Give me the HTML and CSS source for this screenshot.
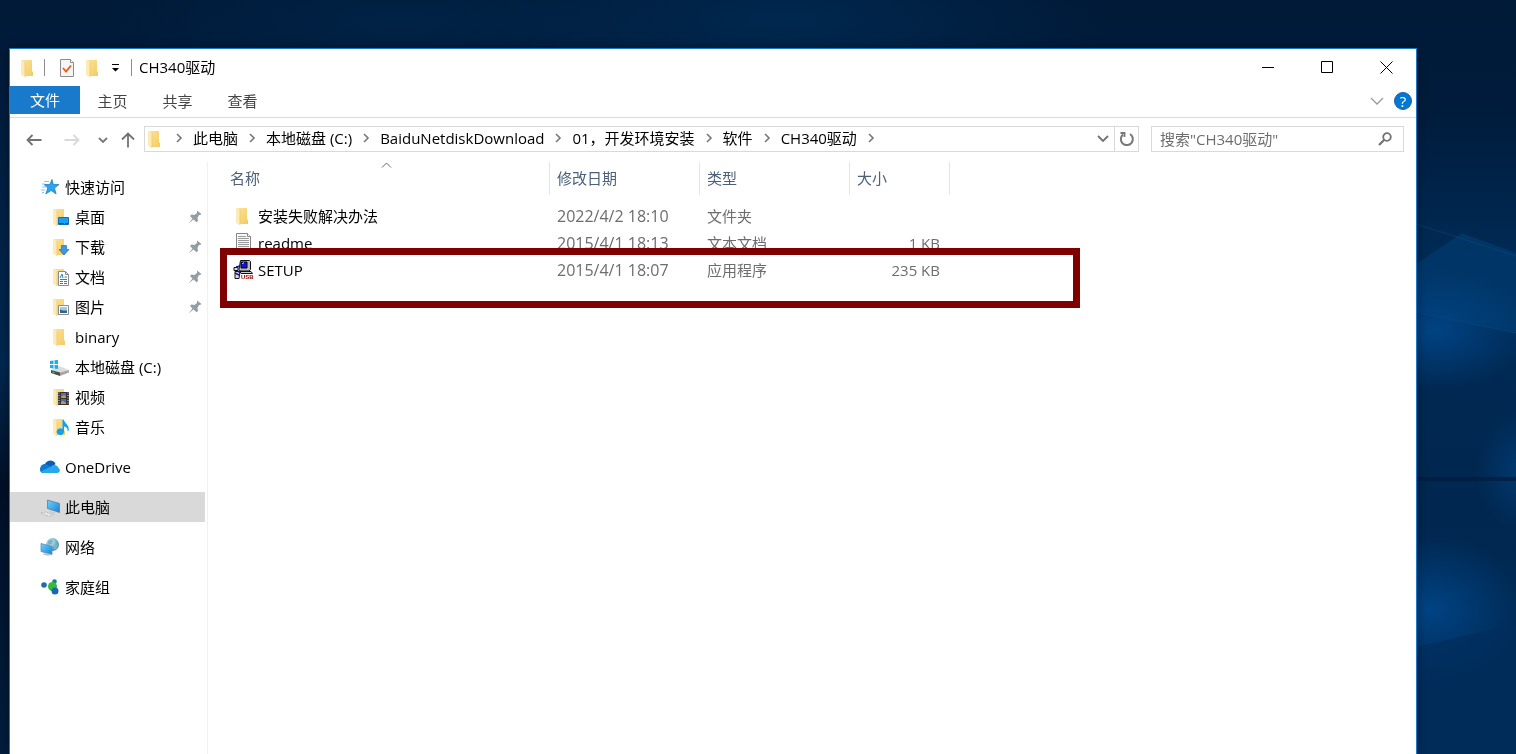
FILE: index.html
```html
<!DOCTYPE html>
<html lang="zh-CN">
  <head>
    <meta charset="UTF-8" />
    <meta name="viewport" content="width=device-width, initial-scale=1.0" />
    <title>CH340驱动</title>
    <link rel="stylesheet" href="styles.css">
  </head>
  <body>
    <!-- shared icons -->
    <svg class="sprite" aria-hidden="true">
      <defs>
        <linearGradient id="gold" x1="0" y1="0" x2="1" y2="1">
          <stop offset="0" stop-color="#fbe39a" />
          <stop offset="1" stop-color="#f3cb62" />
        </linearGradient>
        <linearGradient id="screen" x1="0" y1="0" x2="1" y2="1">
          <stop offset="0" stop-color="#6fd0ff" />
          <stop offset="1" stop-color="#1683d8" />
        </linearGradient>
        <radialGradient id="globeFill" cx="0.35" cy="0.3" r="0.8">
          <stop offset="0" stop-color="#d7eef5" />
          <stop offset="1" stop-color="#2c7fa8" />
        </radialGradient>
      </defs>
      <symbol id="folder" viewBox="0 0 20 20">
        <path d="M4 2h10v11l1 1v4H6z" fill="url(#gold)" />
        <path d="M3 2l4 2v15l-4-2z" fill="#fdebb5" />
        <path d="M7 4v15" stroke="#eec462" stroke-width="0.7" />
      </symbol>
      <symbol id="pin" viewBox="0 0 14 14">
        <path d="M9 0.500L13.500 4l-1.500 1-1 0-1.500 3 0.500 3-1.500 1.200-3-2.700-5 4 4-5L2 6l1.500-1.500 3 0.500 2.500-2z" fill="#929da5" />
      </symbol>
      <symbol id="next" viewBox="0 0 8 10">
        <path d="M2 1l4 4-4 4" fill="none" stroke="#777" stroke-width="1.6" />
      </symbol>
    </svg>

    <!-- desktop wallpaper -->
    <svg class="wallpaper" viewBox="0 0 1516 754" preserveAspectRatio="xMaxYMin slice" aria-hidden="true">
      <defs>
        <linearGradient id="sky" x1="0" y1="0" x2="0" y2="1">
          <stop offset="0" stop-color="#001a38" />
          <stop offset="0.15" stop-color="#001c3c" />
          <stop offset="0.35" stop-color="#002b56" />
          <stop offset="0.63" stop-color="#00274f" />
          <stop offset="1" stop-color="#002a55" />
        </linearGradient>
        <linearGradient id="leftShade" x1="0" y1="0" x2="0" y2="1">
          <stop offset="0" stop-color="#001a38" />
          <stop offset="0.45" stop-color="#00274f" />
          <stop offset="0.62" stop-color="#001026" />
          <stop offset="1" stop-color="#001d3d" />
        </linearGradient>
        <radialGradient id="topGlow">
          <stop offset="0" stop-color="#00284f" />
          <stop offset="1" stop-color="#00284f" stop-opacity="0" />
        </radialGradient>
        <radialGradient id="glow">
          <stop offset="0" stop-color="#004383" />
          <stop offset="1" stop-color="#004383" stop-opacity="0" />
        </radialGradient>
      </defs>
      <path d="M0 0h1516v754H0z" fill="url(#sky)" />
      <path d="M0 48h12v706H0z" fill="url(#leftShade)" />
      <ellipse cx="780" cy="20" rx="330" ry="90" fill="url(#topGlow)" />
      <ellipse cx="400" cy="20" rx="300" ry="70" fill="url(#topGlow)" opacity="0.6" />
      <path d="M1400 275l62-42 54 20v80l-116-25z" fill="#004077" opacity="0.55" />
      <ellipse cx="1435" cy="330" rx="100" ry="60" fill="url(#glow)" />
      <path d="M1410 222l106 34M1410 311l106 22" stroke="#0a4a82" opacity="0.5" />
      <ellipse cx="1516" cy="470" rx="40" ry="60" fill="url(#glow)" opacity="0.6" />
      <path d="M1400 479h116" stroke="#001e40" stroke-width="4" opacity="0.8" />
      <ellipse cx="1430" cy="610" rx="100" ry="75" fill="url(#glow)" />
      <path d="M1400 651l116-27v130h-116z" fill="#002e5c" opacity="0.7" />
    </svg>

    <div class="window">
      <header class="titlebar">
        <svg class="icon"><use href="#folder" /></svg>
        <span class="divider"></span>
        <button class="quick" aria-label="属性">
          <svg class="icon" viewBox="0 0 20 20">
            <path d="M3.500 1.500h10l3 3v14h-13z" fill="#f5f5f5" stroke="#8c8c8c" />
            <path d="M13.500 1.500v3h3" fill="#fff" stroke="#8c8c8c" />
            <path d="M6 10l3 3.500 5-6" fill="none" stroke="#f05a12" stroke-width="1.800" />
          </svg>
        </button>
        <button class="quick" aria-label="新建文件夹">
          <svg class="icon"><use href="#folder" /></svg>
        </button>
        <button class="quick caret" aria-label="自定义">
          <svg width="7" height="8" viewBox="0 0 7 8"><path d="M0 0h7v1H0zM0 4h7L3.500 7.500z" /></svg>
        </button>
        <span class="divider"></span>
        <h1>CH340驱动</h1>
        <div class="controls">
          <button aria-label="最小化">
            <svg width="13" height="13"><path d="M0 6.500h12" stroke="#000" /></svg>
          </button>
          <button aria-label="最大化">
            <svg width="13" height="13"><path d="M0.500 0.500h11v11h-11z" fill="none" stroke="#000" /></svg>
          </button>
          <button aria-label="关闭">
            <svg width="13" height="13"><path d="M0.500 0.500l12 12M12.500 0.500l-12 12" stroke="#000" /></svg>
          </button>
        </div>
      </header>

      <nav class="ribbon">
        <button class="tab file">文件</button>
        <button class="tab">主页</button>
        <button class="tab">共享</button>
        <button class="tab">查看</button>
        <div class="ribbon-end">
          <button aria-label="展开功能区">
            <svg width="14" height="8"><path d="M1 1l6 6 6-6" fill="none" stroke="#999" stroke-width="1.300" /></svg>
          </button>
          <button class="help" aria-label="帮助">?</button>
        </div>
      </nav>

      <div class="address-row">
        <button class="nav" aria-label="后退">
          <svg width="16" height="12"><path d="M15.500 6H1.500M6.500 1l-5 5 5 5" fill="none" stroke="#727272" stroke-width="1.800" /></svg>
        </button>
        <button class="nav" aria-label="前进">
          <svg width="16" height="12"><path d="M0.500 6h14M9.500 1l5 5-5 5" fill="none" stroke="#d9d9d9" stroke-width="1.800" /></svg>
        </button>
        <button class="nav small" aria-label="最近位置">
          <svg width="10" height="7"><path d="M1 1l4 4 4-4" fill="none" stroke="#777" stroke-width="1.800" /></svg>
        </button>
        <button class="nav up" aria-label="向上">
          <svg width="14" height="16"><path d="M7 15.500V1.500M1 7.500l6-6 6 6" fill="none" stroke="#727272" stroke-width="1.800" /></svg>
        </button>

        <div class="address">
          <svg class="icon"><use href="#folder" /></svg>
          <ol class="crumbs">
            <li><svg><use href="#next" /></svg><a href="#">此电脑</a></li>
            <li><svg><use href="#next" /></svg><a href="#">本地磁盘 (C:)</a></li>
            <li><svg><use href="#next" /></svg><a href="#">BaiduNetdiskDownload</a></li>
            <li><svg><use href="#next" /></svg><a href="#">01，开发环境安装</a></li>
            <li><svg><use href="#next" /></svg><a href="#">软件</a></li>
            <li><svg><use href="#next" /></svg><a href="#">CH340驱动</a></li>
            <li><svg><use href="#next" /></svg></li>
          </ol>
          <button class="history" aria-label="以前的位置">
            <svg width="12" height="8"><path d="M1 1l5 5 5-5" fill="none" stroke="#727272" stroke-width="1.800" /></svg>
          </button>
          <button class="refresh" aria-label="刷新">
            <svg width="16" height="16" viewBox="0 0 16 16">
              <path d="M4 3.500A6 6 0 1 0 11 3" fill="none" stroke="#777" stroke-width="2" />
              <path d="M1.500 2h4v4" fill="none" stroke="#777" stroke-width="1.800" />
            </svg>
          </button>
        </div>

        <div class="search">
          <input type="search" aria-label="搜索" placeholder='搜索"CH340驱动"' />
          <button aria-label="开始搜索">
            <svg width="14" height="14"><circle cx="9" cy="5" r="3.800" fill="none" stroke="#727272" stroke-width="1.800" /><path d="M6.300 7.700L1 13" stroke="#727272" stroke-width="2.200" /></svg>
          </button>
        </div>
      </div>

      <div class="content">
        <aside class="sidebar">
          <ul>
            <li><a href="#">
              <svg class="icon" viewBox="0 0 20 20">
                <path d="M12 2.500l1.300 5H19l-4.500 3.500 1.600 6-5-3.500-5.300 3.500 2-6L4 7.500h5.700z" fill="#2ea3ee" stroke="#1475bd" stroke-width="0.700" />
                <path d="M4 4.500h5M2 7h3M2 10h4M1 13h4M2 15.500h2" stroke="#83c8f2" />
              </svg>快速访问</a>
              <ul>
                <li><a href="#">
                  <svg class="icon" viewBox="0 0 20 20">
                    <use href="#folder" />
                    <path d="M8.500 10.500h10v7h-10z" fill="#18a0f5" stroke="#116db4" />
                    <path d="M9 16.500h9" stroke="#0d579b" stroke-dasharray="5 1" />
                  </svg>桌面<svg class="pin"><use href="#pin" /></svg></a></li>
                <li><a href="#">
                  <svg class="icon" viewBox="0 0 20 20">
                    <use href="#folder" />
                    <path d="M11.500 8.500h5v4h2.500l-5 5.500-5-5.500h2.500z" fill="#3e97e2" stroke="#2770b5" stroke-width="0.700" />
                  </svg>下载<svg class="pin"><use href="#pin" /></svg></a></li>
                <li><a href="#">
                  <svg class="icon" viewBox="0 0 20 20">
                    <use href="#folder" />
                    <path d="M8.500 4.500h7l3 3v11h-10z" fill="#fff" stroke="#8b8b8b" />
                    <path d="M15.500 4.500v3h3" fill="none" stroke="#8b8b8b" />
                    <path d="M10 11l2-4 1 4M14.500 10h2.500M10 12.500h7M10 14.500h3M14 14.500h3M10 16.500h3M14 16.500h3" fill="none" stroke="#1e86c6" />
                  </svg>文档<svg class="pin"><use href="#pin" /></svg></a></li>
                <li><a href="#">
                  <svg class="icon" viewBox="0 0 20 20">
                    <use href="#folder" />
                    <path d="M8.500 8.500h10v9h-10z" fill="#fff" stroke="#8b8b8b" />
                    <path d="M10 10h7v6h-7z" fill="#9acdf0" />
                    <path d="M10 12.500l3 1 4 0V16h-7z" fill="#3a6477" />
                  </svg>图片<svg class="pin"><use href="#pin" /></svg></a></li>
                <li><a href="#"><svg class="icon"><use href="#folder" /></svg>binary</a></li>
                <li><a href="#">
                  <svg class="icon" viewBox="0 0 20 20">
                    <path d="M1 13l8-4 10 4-9 3z" fill="#dcdcdc" />
                    <path d="M1 13l9 2.500V19l-9-3z" fill="#4c4c4c" />
                    <path d="M10 15.500l9-2.500v2.500L10 19z" fill="#a6a6a6" />
                    <path d="M0 4l3.500-.5v3.500H0zM4.500 3.300L8 3v4H4.500zM0 8h3.500v3.500L0 11zM4.500 8H8v4l-3.500-.4z" fill="#14b1eb" />
                    <path d="M2.500 15l2 .500" stroke="#5bda64" />
                  </svg>本地磁盘 (C:)</a></li>
                <li><a href="#">
                  <svg class="icon" viewBox="0 0 20 20">
                    <use href="#folder" />
                    <path d="M8 5h11v13H8z" fill="#343434" />
                    <path d="M9 5.500v12M18 5.500v12" stroke="#ddd" stroke-dasharray="1 1.500" />
                    <path d="M11 6h5v5h-5z" fill="#4674c7" /><path d="M11 12h5v5h-5z" fill="#3970c3" />
                    <path d="M11 10l3-2 2 2v1h-5zM11 15l2-1 3 2v1h-5z" fill="#d7953d" />
                  </svg>视频</a></li>
                <li><a href="#">
                  <svg class="icon" viewBox="0 0 20 20">
                    <use href="#folder" />
                    <path d="M12.500 3h1.500c1 4 6 5 4.500 11h-1c0.500-3-1.500-4-3.500-4.500v5.500a3.700 3.300 0 1 1-1.500-3z" fill="#0ea2f2" />
                  </svg>音乐</a></li>
              </ul>
            </li>
            <li><a href="#">
              <svg class="icon" viewBox="0 0 20 20">
                <path d="M5 7c2-4 8-5 10.500 0L10 12z" fill="#0a5db5" />
                <path d="M0 12.500C0 9 3 6 7 7.500l7 4L3 16c-2 0-3-1.500-3-3.500z" fill="#0f78d4" />
                <path d="M1 14.500l10-5c3-3 7-1 7.500 1.500 2.500 1.500 1.500 5-1.500 5H4c-1.500 0-2.500-.5-3-1.500z" fill="#28a8ea" />
              </svg>OneDrive</a></li>
            <li><a href="#" class="selected">
              <svg class="icon" viewBox="0 0 20 20">
                <path d="M7.500 3l12 3.500v9l-12-4z" fill="url(#screen)" stroke="#5f7d8e" stroke-width="0.800" />
                <path d="M10 14l6 2-2 1-5-2z" fill="#c4cacd" />
                <path d="M1 16l5-1 7 3-4 1.500z" fill="#e6e6e6" stroke="#a6adb0" stroke-width="0.700" stroke-dasharray="2 1" />
              </svg>此电脑</a></li>
            <li><a href="#">
              <svg class="icon" viewBox="0 0 20 20">
                <circle cx="12.500" cy="7.500" r="6.500" fill="url(#globeFill)" />
                <path d="M8 4l3-2 2 2-1 3-4 1zM14 8l4-1-1 4-3 2z" fill="#79b5ca" />
                <path d="M1 6.500l11 3v8l-11-3z" fill="url(#screen)" stroke="#5990b3" stroke-width="0.800" />
                <path d="M5 16l5 1.500 0 1-3 0-4-1z" fill="#b8bec2" />
              </svg>网络</a></li>
            <li><a href="#">
              <svg class="icon" viewBox="0 0 20 20">
                <circle cx="4" cy="8" r="2.800" fill="#1b6cb9" />
                <circle cx="14.500" cy="4.500" r="2.300" fill="#197ba0" />
                <circle cx="12.500" cy="9.500" r="4.500" fill="#35b93f" />
                <circle cx="15" cy="14" r="3.500" fill="#1c65b6" />
              </svg>家庭组</a></li>
          </ul>
        </aside>

        <main class="files">
          <table>
            <colgroup>
              <col class="col-name" />
              <col class="col-date" />
              <col class="col-type" />
              <col class="col-size" />
            </colgroup>
            <thead>
              <tr>
                <th>名称<svg class="sort" width="11" height="6"><path d="M1 5.500l4.500-4.500 4.500 4.500" fill="none" stroke="#666" /></svg></th>
                <th>修改日期</th>
                <th>类型</th>
                <th>大小</th>
              </tr>
            </thead>
            <tbody>
              <tr>
                <td><div class="name"><svg class="icon"><use href="#folder" /></svg>安装失败解决办法</div></td>
                <td class="date">2022/4/2 18:10</td>
                <td>文件夹</td>
                <td></td>
              </tr>
              <tr>
                <td><div class="name">
                  <svg class="icon" viewBox="0 0 20 20">
                    <path d="M3.500 0.500h11l3 3v15h-14z" fill="#f8f8f8" stroke="#868686" />
                    <path d="M14.500 0.500v3h3" fill="#fff" stroke="#868686" />
                    <path d="M5 3.500h8M5 5.500h11M5 7.500h11M5 9.500h11M5 11.500h11M5 13.500h11" stroke="#999" />
                  </svg>readme</div></td>
                <td class="date">2015/4/1 18:13</td>
                <td>文本文档</td>
                <td>1 KB</td>
              </tr>
              <tr>
                <td><div class="name">
                  <svg class="icon" viewBox="0 0 20 20">
                    <path d="M7.500 0.500h9l1 1v8l-1.500 1.500H7l-1-1.500z" fill="#bdbdbd" stroke="#111" />
                    <path d="M8 2h6v6H8z" fill="#1010e0" stroke="#000" />
                    <path d="M9.500 4l1-1.500" stroke="#fff" />
                    <path d="M7 11.500h11l1.500 2H8z" fill="#ccc" stroke="#111" />
                    <path d="M1 7.500h4v3H1zM2 11.500h5l-1 7H2z" fill="#ddd" stroke="#111" />
                    <path d="M3 7l4-1M2 13l4 2M5 11l2 2" stroke="#1818a0" stroke-width="1.500" />
                    <text x="8" y="19" class="usb">USB</text>
                  </svg>SETUP</div></td>
                <td class="date">2015/4/1 18:07</td>
                <td>应用程序</td>
                <td>235 KB</td>
              </tr>
            </tbody>
          </table>
          <div class="marker"></div>
        </main>
      </div>
    </div>
  </body>
</html>
```

FILE: styles.css
```css
* {
  box-sizing: border-box;
}
body {
  margin: 0;
  min-height: 100vh;
  padding: 48px 99px 0 9px;
  display: flex;
  font-family: "Open Sans", "Noto Sans CJK SC", sans-serif;
  font-size: 15px;
  line-height: 20px;
  color: #000;
  background: #001c3c;
}
ul,
ol {
  margin: 0;
  padding: 0;
  list-style: none;
}
a {
  color: inherit;
  text-decoration: none;
}
button,
input {
  margin: 0;
  padding: 0;
  border: 0;
  background: none;
  font: inherit;
  color: inherit;
}
button {
  display: flex;
  align-items: center;
  justify-content: center;
}
svg {
  flex: none;
}
.sprite {
  position: absolute;
  width: 0;
  height: 0;
}
.wallpaper {
  position: fixed;
  top: 0;
  left: 0;
  z-index: -1;
  width: 100%;
  height: 100%;
}
.icon {
  width: 20px;
  height: 20px;
}
.window {
  flex: 1;
  min-width: 0;
  display: flex;
  flex-direction: column;
  background: #fff;
  border: 1px solid #1979ca;
  border-bottom: 0;
  box-shadow: 0 0 8px rgba(0, 0, 0, 0.4);
}

/* title bar */
.titlebar {
  display: flex;
  align-items: center;
  height: 37px;
  padding-left: 8px;
}
.divider {
  width: 1px;
  height: 17px;
  margin: 0 7px 0 6px;
  background: #8c8c8c;
}
.quick {
  width: 26px;
  height: 24px;
}
.quick:first-of-type {
  margin-left: 2px;
}
.caret {
  width: 19px;
}
h1 {
  margin: 0;
  padding-bottom: 2px;
  font-size: 15px;
  font-weight: normal;
}
.controls {
  display: flex;
  margin-left: auto;
}
.controls button {
  width: 59px;
  height: 37px;
}

/* ribbon tabs */
.ribbon {
  display: flex;
  height: 32px;
  border-bottom: 1px solid #dadbdc;
  color: #444;
}
.tab {
  width: 65px;
  height: 30px;
}
.file {
  width: 70px;
  height: 28px;
  background: #1979ca;
  color: #fff;
}
.ribbon-end {
  display: flex;
  align-items: center;
  gap: 10px;
  height: 30px;
  margin-left: auto;
  padding-right: 4px;
}
.help {
  width: 18px;
  height: 18px;
  border-radius: 50%;
  background: #0078d7;
  border: 1px solid #2762a0;
  color: #fff;
}

/* address bar */
.address-row {
  display: flex;
  height: 26px;
  margin: 8px 12px 10px 5px;
}
.nav {
  width: 38px;
  padding-top: 2px;
}
.small {
  width: 24px;
}
.up {
  width: 26px;
  margin-right: 3px;
}
.address {
  flex: 1;
  min-width: 0;
  display: flex;
  align-items: center;
  border: 1px solid #d9d9d9;
}
.crumbs {
  display: flex;
  flex: 1;
  min-width: 0;
  padding-bottom: 2px;
  overflow: hidden;
  white-space: nowrap;
}
.crumbs li {
  display: flex;
  align-items: center;
}
.crumbs svg {
  width: 8px;
  height: 10px;
  margin: 0 10px;
}
.history {
  width: 22px;
  height: 24px;
}
.refresh {
  width: 24px;
  height: 24px;
  border-left: 1px solid #d9d9d9;
}
.search {
  display: flex;
  width: 253px;
  margin-left: 12px;
  border: 1px solid #d9d9d9;
}
.search input {
  flex: 1;
  min-width: 0;
  padding-left: 8px;
  outline: 0;
}
.search input::placeholder {
  color: #6d6d6d;
}
.search button {
  width: 36px;
}

/* navigation pane */
.content {
  flex: 1;
  display: flex;
}
.sidebar {
  width: 198px;
  padding: 10px 2px 0 0;
  border-right: 1px solid #f0f0f0;
}
.sidebar > ul > li {
  margin-bottom: 10px;
}
.sidebar a {
  display: flex;
  align-items: center;
  gap: 5px;
  height: 30px;
  padding-left: 30px;
}
.sidebar ul ul a {
  padding-left: 40px;
}
.sidebar .selected {
  background: #d9d9d9;
}
.pin {
  width: 14px;
  height: 14px;
  margin: 0 3px 0 auto;
}

/* file list */
.files {
  position: relative;
  flex: 1;
  min-width: 0;
  padding-left: 15px;
}
table {
  width: 727px;
  table-layout: fixed;
  border-collapse: separate;
  border-spacing: 0;
}
.col-name {
  width: 327px;
}
.col-date,
.col-type {
  width: 150px;
}
.col-size {
  width: 100px;
}
th {
  position: relative;
  height: 33px;
  padding: 0 0 2px 7px;
  border-right: 1px solid #e5e5e5;
  color: #4c607a;
  font-weight: normal;
  text-align: left;
}
.sort {
  position: absolute;
  top: 0;
  left: 50%;
  margin-left: -5px;
}
tbody::before {
  content: "";
  display: block;
  height: 7px;
}
td {
  height: 27px;
  padding: 0 0 0 7px;
  color: #6d6d6d;
}
td:last-child {
  padding-right: 10px;
  text-align: right;
}
.date {
  font-size: 16px;
}
.name {
  display: flex;
  align-items: center;
  gap: 5px;
  padding-left: 3px;
  color: #000;
}
.usb {
  font: bold 6px "Liberation Sans", sans-serif;
  fill: #a00000;
}
.marker {
  position: absolute;
  top: 86px;
  left: 12px;
  width: 860px;
  max-width: 100%;
  height: 60px;
  border: 7px solid #800000;
}
```
